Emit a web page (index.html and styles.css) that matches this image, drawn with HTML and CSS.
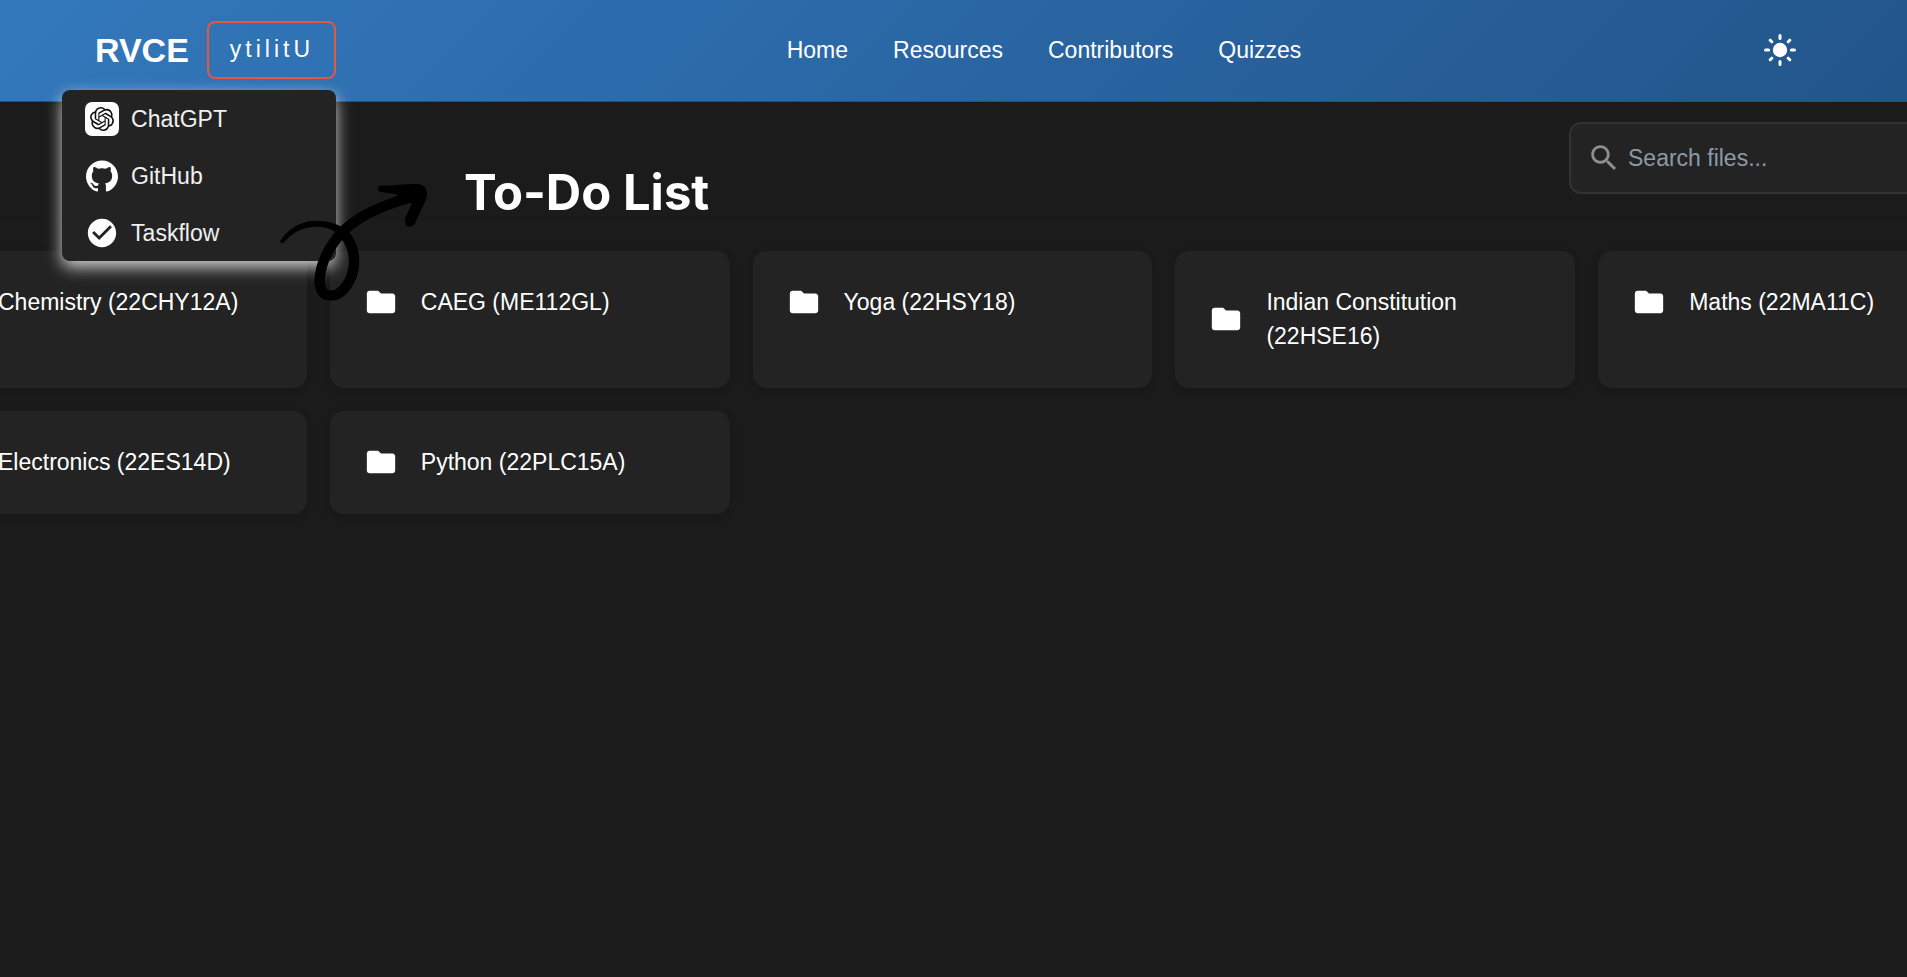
FILE: index.html
```html
<!DOCTYPE html>
<html lang="en">
<head>
<meta charset="utf-8">
<meta name="viewport" content="width=device-width, initial-scale=1">
<title>RVCE Resources</title>
<link rel="stylesheet" href="styles.css">
</head>
<body>
<svg class="sprite" aria-hidden="true">
  <symbol id="folder" viewBox="0 0 24 24"><path d="M10 4H4c-1.100 0-1.990.9-1.990 2L2 18c0 1.100.9 2 2 2h16c1.100 0 2-.9 2-2V8c0-1.100-.9-2-2-2h-8l-2-2z"/></symbol>
</svg>

<header class="header">
  <div class="brand">
    <a class="brand-name" href="#">RVCE</a>
    <div class="utility">
      <button class="utility-button" type="button" aria-expanded="true">ytilitU</button>
      <div class="menu">
        <a class="menu-item" href="#">
          <span class="menu-icon menu-icon-boxed">
            <svg viewBox="0 0 24 24" width="24" height="24"><path d="M22.282 9.821a5.985 5.985 0 0 0-.516-4.910 6.046 6.046 0 0 0-6.510-2.900A6.065 6.065 0 0 0 4.981 4.182a5.985 5.985 0 0 0-3.998 2.900 6.046 6.046 0 0 0 .743 7.097 5.980 5.980 0 0 0 .511 4.911 6.051 6.051 0 0 0 6.515 2.900A5.985 5.985 0 0 0 13.260 24a6.056 6.056 0 0 0 5.772-4.206 5.990 5.990 0 0 0 3.997-2.900 6.056 6.056 0 0 0-.747-7.073zM13.260 22.430a4.476 4.476 0 0 1-2.876-1.040l.141-.081 4.779-2.758a.795.795 0 0 0 .393-.681v-6.737l2.020 1.169a.071.071 0 0 1 .038.052v5.583a4.504 4.504 0 0 1-4.495 4.494zM3.600 18.304a4.471 4.471 0 0 1-.535-3.014l.142.085 4.783 2.759a.771.771 0 0 0 .781 0l5.843-3.369v2.332a.080.080 0 0 1-.033.062L9.740 19.950a4.500 4.500 0 0 1-6.140-1.646zM2.341 7.896a4.485 4.485 0 0 1 2.366-1.973V11.600a.766.766 0 0 0 .388.677l5.815 3.354-2.020 1.169a.076.076 0 0 1-.071 0l-4.830-2.787A4.504 4.504 0 0 1 2.341 7.872zm16.597 3.855l-5.833-3.387L15.119 7.200a.076.076 0 0 1 .071 0l4.830 2.791a4.494 4.494 0 0 1-.676 8.105v-5.678a.790.790 0 0 0-.407-.667zm2.011-3.023l-.142-.085-4.774-2.782a.776.776 0 0 0-.785 0L9.409 9.230V6.897a.066.066 0 0 1 .028-.061l4.830-2.787a4.499 4.499 0 0 1 6.680 4.660zM8.307 12.863l-2.020-1.164a.080.080 0 0 1-.038-.057V6.075a4.499 4.499 0 0 1 7.375-3.454l-.142.081L8.704 5.460a.795.795 0 0 0-.393.681zm1.097-2.365l2.602-1.500 2.607 1.500v2.999l-2.597 1.500-2.607-1.500z"/></svg>
          </span>
          ChatGPT
        </a>
        <a class="menu-item" href="#">
          <span class="menu-icon">
            <svg viewBox="0 0 24 24" width="32" height="32"><path d="M12 .297c-6.630 0-12 5.373-12 12 0 5.303 3.438 9.800 8.205 11.385.6.113.82-.258.82-.577 0-.285-.010-1.040-.015-2.040-3.338.724-4.042-1.610-4.042-1.610C4.422 18.070 3.633 17.700 3.633 17.700c-1.087-.744.084-.729.084-.729 1.205.084 1.838 1.236 1.838 1.236 1.070 1.835 2.809 1.305 3.495.998.108-.776.417-1.305.760-1.605-2.665-.300-5.466-1.332-5.466-5.930 0-1.310.465-2.380 1.235-3.220-.135-.303-.540-1.523.105-3.176 0 0 1.005-.322 3.300 1.230.960-.267 1.980-.399 3-.405 1.020.006 2.040.138 3 .405 2.280-1.552 3.285-1.230 3.285-1.230.645 1.653.240 2.873.120 3.176.765.840 1.230 1.910 1.230 3.220 0 4.610-2.805 5.625-5.475 5.920.420.360.810 1.096.810 2.220 0 1.606-.015 2.896-.015 3.286 0 .315.210.690.825.570C20.565 22.092 24 17.592 24 12.297c0-6.627-5.373-12-12-12"/></svg>
          </span>
          GitHub
        </a>
        <a class="menu-item" href="#">
          <span class="menu-icon">
            <svg viewBox="0 0 24 24" width="34" height="34"><path d="M12 2C6.480 2 2 6.480 2 12s4.480 10 10 10 10-4.480 10-10S17.520 2 12 2zm-2 15l-5-5 1.410-1.410L10 14.170l7.590-7.590L19 8l-9 9z"/></svg>
          </span>
          Taskflow
        </a>
      </div>
    </div>
  </div>
  <nav class="nav">
    <a href="#">Home</a>
    <a href="#">Resources</a>
    <a href="#">Contributors</a>
    <a href="#">Quizzes</a>
  </nav>
  <button class="theme-button" type="button" aria-label="Switch theme">
    <svg viewBox="0 0 32 32" width="32" height="32"><circle cx="16" cy="16" r="7.200"/><path d="M16 1.600v3M16 27.400v3M1.600 16h3M27.400 16h3M6.200 6.200l1.600 1.600M24.200 24.200l1.600 1.600M6.200 25.800l1.600-1.600M24.200 7.800l1.600-1.600"/></svg>
  </button>
</header>

<main class="page">
  <div class="toolbar">
    <label class="search">
      <svg class="search-icon" viewBox="0 0 24 24" width="34" height="34" aria-hidden="true"><path d="M15.500 14h-.790l-.280-.270C15.410 12.590 16 11.110 16 9.500 16 5.910 13.090 3 9.500 3S3 5.910 3 9.500 5.910 16 9.500 16c1.610 0 3.090-.590 4.230-1.570l.270.280v.790l5 4.990L20.490 19l-4.990-5zm-6 0C7.010 14 5 11.990 5 9.500S7.010 5 9.500 5 14 7.010 14 9.500 11.990 14 9.500 14z"/></svg>
      <input class="search-input" type="search" placeholder="Search files..." aria-label="Search files">
    </label>
  </div>
  <div class="folders">
    <a class="card" href="#"><span class="card-row"><svg class="folder"><use href="#folder"/></svg><span>Chemistry (22CHY12A)</span></span></a>
    <a class="card" href="#"><span class="card-row"><svg class="folder"><use href="#folder"/></svg><span>CAEG (ME112GL)</span></span></a>
    <a class="card" href="#"><span class="card-row"><svg class="folder"><use href="#folder"/></svg><span>Yoga (22HSY18)</span></span></a>
    <a class="card" href="#"><span class="card-row"><svg class="folder"><use href="#folder"/></svg><span>Indian Constitution (22HSE16)</span></span></a>
    <a class="card" href="#"><span class="card-row"><svg class="folder"><use href="#folder"/></svg><span>Maths (22MA11C)</span></span></a>
    <a class="card" href="#"><span class="card-row"><svg class="folder"><use href="#folder"/></svg><span>Electronics (22ES14D)</span></span></a>
    <a class="card" href="#"><span class="card-row"><svg class="folder"><use href="#folder"/></svg><span>Python (22PLC15A)</span></span></a>
  </div>
</main>

<!-- Annotation laid over the open menu -->
<svg class="arrow" viewBox="60 60 450 366" width="150" height="122" aria-hidden="true">
  <path d="M62 241C86 203 126 182 172 182C208 182 240 194 264 214L240 230C222 208 198 200 170 200C130 200 98 216 73 246C67 252 58 248 62 241Z"/>
  <path class="arrow-line" d="M246 217C270 236 284 275 282 312C279 362 246 407 213 407C187 407 178 386 179 360C182 290 232 215 300 174C346 146 400 126 465 108"/>
  <path d="M362 77C400 78 430 72 470 72C492 72 503 85 501 108C500 118 472 175 467 186C462 198 452 202 444 200C435 196 433 185 437 172L456 130L400 120L412 103L366 97C350 95 351 78 362 77Z"/>
</svg>
<p class="note">To-Do List</p>
</body>
</html>
```

FILE: styles.css
```css
* {
  box-sizing: border-box;
}

body {
  position: relative;
  min-height: 100vh;
  margin: 0;
  overflow-x: hidden;
  background: #1b1b1b;
  color: #fff;
  font-family: "Liberation Sans", Arial, sans-serif;
  font-size: 23px;
  line-height: 34px;
}

a {
  color: inherit;
  text-decoration: none;
}

button,
input {
  font: inherit;
  color: inherit;
}

.sprite {
  position: absolute;
  width: 0;
  height: 0;
}

.header {
  display: flex;
  align-items: center;
  justify-content: space-between;
  height: 102px;
  padding: 0 98px 1px 95px;
  border-bottom: 1px solid #1f5188;
  background: linear-gradient(135deg, #3379bc, #2a66a4 50%, #22558a);
}

.brand {
  display: flex;
  align-items: center;
  gap: 18px;
}

.brand-name {
  font-size: 34px;
  font-weight: 700;
}

.utility {
  position: relative;
}

.utility-button {
  display: block;
  height: 58px;
  padding: 0 20px 2px 21px;
  border: 2px solid #e5583e;
  border-radius: 8px;
  background: transparent;
  letter-spacing: 4px;
}

.menu {
  position: absolute;
  z-index: 2;
  top: 69px;
  right: 0;
  width: 274px;
  border-radius: 8px;
  background: #232323;
  box-shadow: 0 6px 16px rgba(255, 255, 255, 0.8);
}

.menu-item {
  display: flex;
  align-items: center;
  gap: 12px;
  height: 57px;
  padding: 0 23px;
  color: #f0f0f0;
}

.menu-icon {
  display: flex;
  align-items: center;
  justify-content: center;
  width: 34px;
  height: 34px;
  fill: #fff;
}

.menu-icon-boxed {
  border-radius: 7px;
  background: #fff;
  fill: #111;
}

.nav {
  display: flex;
  gap: 45px;
}

.theme-button {
  display: flex;
  justify-content: center;
  width: 57px;
  padding: 0;
  border: 0;
  background: transparent;
  fill: #fff;
  stroke: #fff;
}

.theme-button circle {
  stroke: none;
}

.theme-button path {
  stroke-width: 3;
  stroke-linecap: round;
}

.page {
  overflow: hidden;
}

.toolbar {
  display: flex;
  justify-content: flex-end;
  height: 117px;
  padding-top: 20px;
  border-bottom: 1px solid #181818;
}

.search {
  display: flex;
  align-items: center;
  gap: 7px;
  width: 430px;
  height: 72px;
  margin-right: -92px;
  padding-left: 16px;
  border: 2px solid #323232;
  border-radius: 12px;
  background: #232323;
}

.search-icon {
  flex: none;
  fill: #8e8e8e;
}

.search-input {
  width: 100%;
  padding: 0;
  border: 0;
  outline: 0;
  background: transparent;
}

.search-input::placeholder {
  color: #8e99a8;
  opacity: 1;
}

.folders {
  display: grid;
  grid-template-columns: repeat(5, 1fr);
  gap: 23px;
  width: calc(100% + 184px);
  margin-left: -93px;
  padding: 32px 0;
}

.card {
  padding: 34px 34px 35px;
  border-radius: 14px;
  background: #232323;
  box-shadow: 0 3px 9px rgba(0, 0, 0, 0.15);
}

.card-row {
  display: flex;
  align-items: center;
  gap: 23px;
}

.folder {
  flex: none;
  width: 34px;
  height: 34px;
  fill: #fff;
}

.arrow {
  position: absolute;
  z-index: 3;
  top: 180px;
  left: 280px;
}

.arrow-line {
  fill: none;
  stroke: #000;
  stroke-width: 31;
}

.note {
  position: absolute;
  top: 163px;
  left: 464px;
  margin: 0;
  font-family: Inter, sans-serif;
  font-size: 49px;
  font-weight: 700;
  line-height: 60px;
  white-space: nowrap;
}
```
